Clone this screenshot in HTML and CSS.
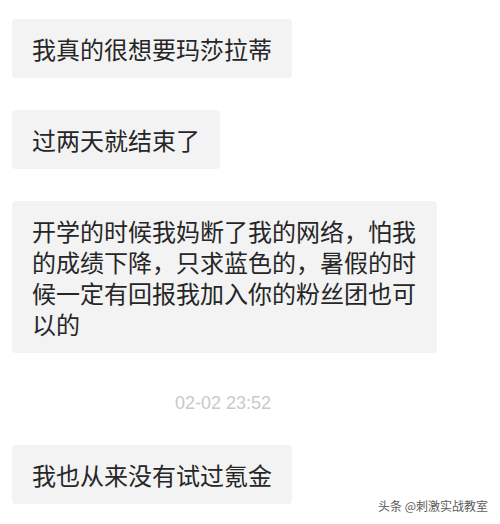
FILE: index.html
```html
<!DOCTYPE html>
<html lang="zh-CN">
<head>
<meta charset="utf-8">
<title>聊天记录</title>
<link rel="stylesheet" href="styles.css">
</head>
<body>
<main class="chat">
  <div class="bubble b1">我真的很想要玛莎拉蒂</div>
  <div class="bubble b2">过两天就结束了</div>
  <div class="bubble b3"><p class="wrap">开学的时候我妈断了我的网络，怕我的成绩下降，只求蓝色的，暑假的时候一定有回报我加入你的粉丝团也可以的</p></div>
  <div class="time">02-02 23:52</div>
  <div class="bubble b4">我也从来没有试过氪金</div>
  <div class="watermark">头条 @刺激实战教室</div>
</main>
</body>
</html>
```

FILE: styles.css
```css
html, body {
  margin: 0;
  padding: 0;
  background: #ffffff;
}
body {
  width: 500px;
  height: 524px;
  overflow: hidden;
}
.chat {
  position: relative;
  height: 524px;
  display: flex;
  flex-direction: column;
  align-items: flex-start;
  padding: 19px 0 0 12px;
  box-sizing: border-box;
  font-family: "Noto Sans CJK SC", "Liberation Sans", sans-serif;
}
.bubble {
  background: #f3f3f4;
  border-radius: 4px;
  padding: 14px 20px;
  font-size: 24px;
  line-height: 31px;
  color: #262626;
  white-space: nowrap;
}
.b2 {
  margin-top: 32px;
}
.b3 {
  margin-top: 32px;
  white-space: normal;
}
.wrap {
  margin: 0;
  width: 385px;
}
.time {
  margin-top: 39px;
  padding-left: 163px;
  font-family: "Liberation Sans", Arial, sans-serif;
  font-size: 18px;
  line-height: 22px;
  color: #c9c9c9;
}
.b4 {
  margin-top: 31px;
}
.watermark {
  position: absolute;
  right: 12px;
  bottom: 11px;
  font-size: 12px;
  line-height: 14px;
  color: #5a5a5a;
  text-shadow: 0 0 2px #ffffff;
}
```
